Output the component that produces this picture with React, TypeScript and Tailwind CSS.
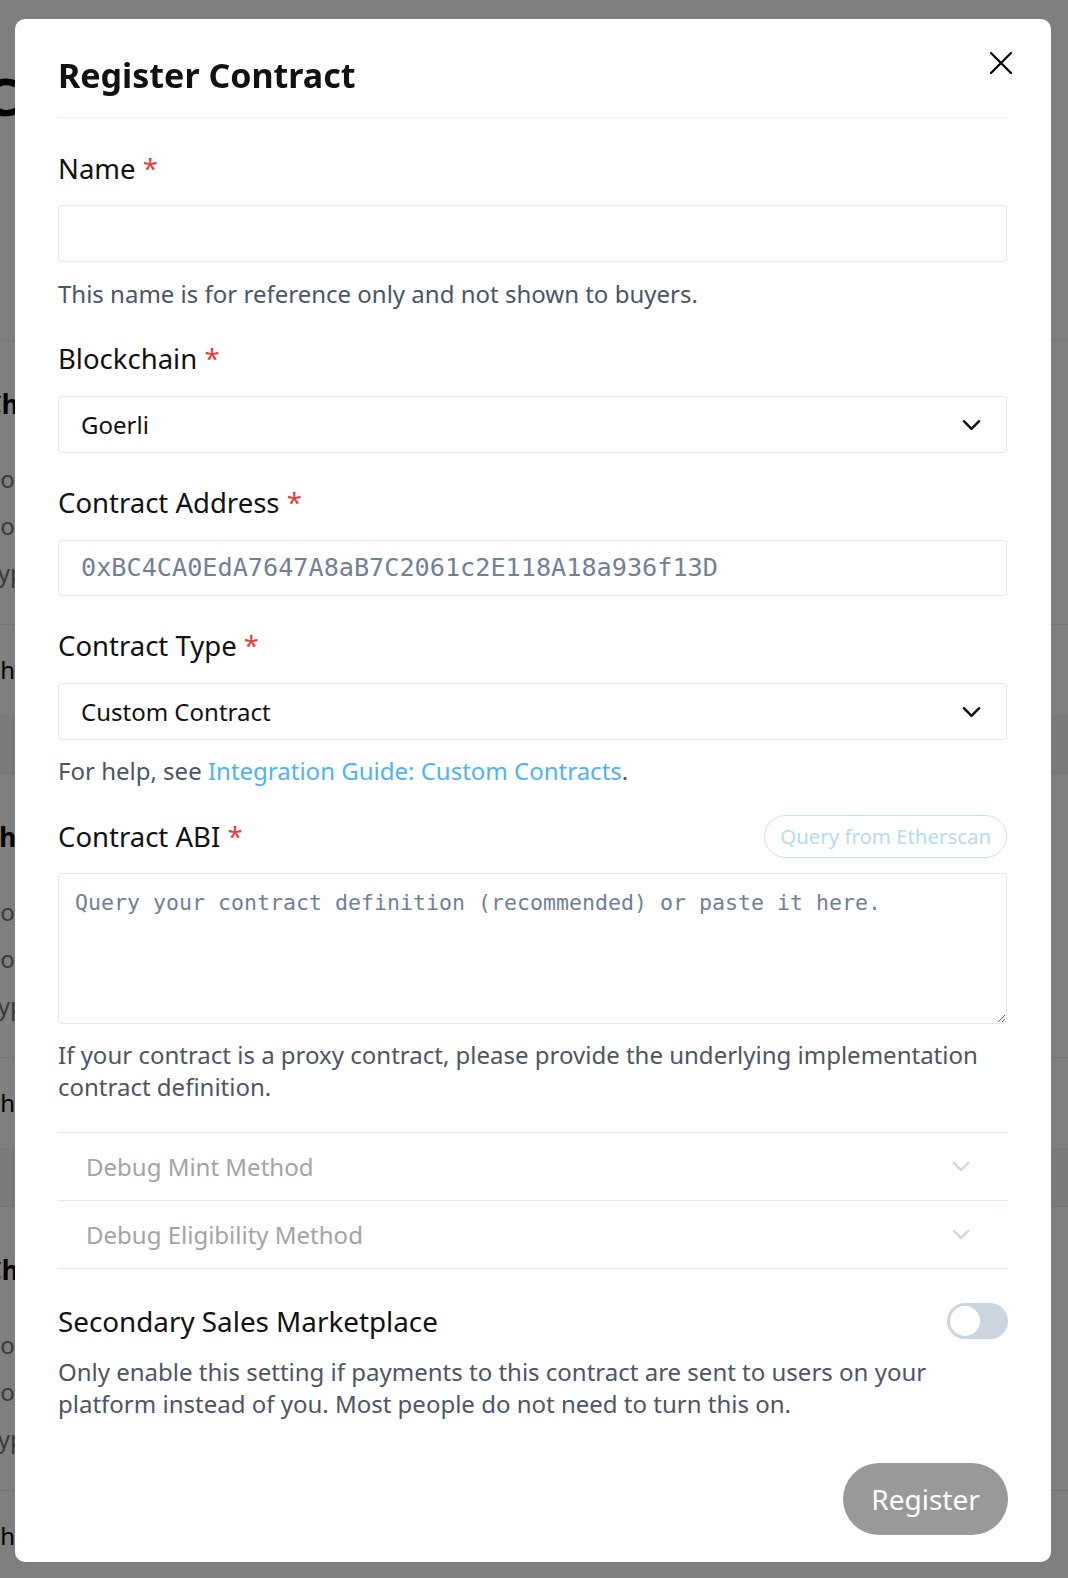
import React from 'react';

const sans = "font-['Noto_Sans',sans-serif]";

const Chevron: React.FC<{ className?: string }> = ({ className }) => (
  <svg viewBox="0 0 20 12" className={className} fill="none" stroke="currentColor" strokeWidth={2.6} strokeLinecap="round" strokeLinejoin="round">
    <path d="M2 2l8 8 8-8" />
  </svg>
);

const Label: React.FC<{ text: string }> = ({ text }) => (
  <div className="text-[27.5px] leading-[36px] text-[#111111]">
    {text} <span className="text-[#e53e3e]">*</span>
  </div>
);

const SelectBox: React.FC<{ value: string }> = ({ value }) => (
  <div className="mt-[19px] h-[57px] flex items-center justify-between pl-[22px] pr-[25px] border border-[#e2e8f0] rounded-[4px] text-[24px] text-[#111111]">
    <span>{value}</span>
    <Chevron className="w-[19px] h-[12px] text-[#111111]" />
  </div>
);

const BgCard: React.FC<{ title: string; footer: string }> = ({ title, footer }) => (
  <div className="border-t border-gray-200 bg-white">
    <div className="pt-[47px] h-[80px] text-[26px] leading-[32px] font-bold text-black">{title}</div>
    <div className="mt-[34px] text-[24px] leading-[47px] text-gray-500">
      <div>Contract address</div>
      <div>Contract name</div>
      <div>Type standard</div>
    </div>
    <div className="mt-[28px] border-t border-gray-200 h-[91px] flex items-center text-[24px] text-black">{footer}</div>
  </div>
);

export default function App() {
  return (
    <div className={`relative min-h-[1578px] bg-white overflow-hidden ${sans}`}>
      {/* page behind the dialog */}
      <div className="-ml-[15px] w-[1100px]">
        <div className="h-[340px] pt-[66px] text-[52px] leading-[60px] font-bold text-black">Contracts</div>
        <BgCard title="Chainlink Token" footer="Change settings" />
        <div className="h-[58px] bg-gray-100" />
        <BgCard title="Shiba Inu" footer="Change settings" />
        <div className="h-[58px] bg-gray-100" />
        <BgCard title="Chimp Club" footer="Change settings" />
      </div>

      <div className="fixed inset-0 bg-black/50" />

      <div className="absolute left-[15px] top-[19px] w-[1036px] bg-white rounded-[10px] pl-[43px] pr-[44px] pb-[27px]">
        <div className="relative pt-[34px] pb-[20px] border-b border-[#edf0f4]">
          <h2 className="text-[34px] leading-[44px] font-bold text-[#111111]">Register Contract</h2>
          <button className="absolute right-[-7px] top-[31px] w-[26px] h-[26px] flex items-center justify-center text-black">
            <svg viewBox="0 0 24 24" className="w-[24px] h-[24px]" fill="none" stroke="currentColor" strokeWidth={2.2} strokeLinecap="round">
              <path d="M2 2l20 20M22 2L2 22" />
            </svg>
          </button>
        </div>

        <div className="mt-[33px]">
          <Label text="Name" />
          <div className="mt-[18px] h-[57px] border border-[#e2e8f0] rounded-[4px]" />
          <p className="mt-[16px] text-[24px] leading-[32px] text-[#4a5568]">This name is for reference only and not shown to buyers.</p>
        </div>

        <div className="mt-[31px]">
          <Label text="Blockchain" />
          <SelectBox value="Goerli" />
        </div>

        <div className="mt-[32px]">
          <Label text="Contract Address" />
          <div className="mt-[19px] h-[56px] flex items-center pl-[22px] border border-[#e2e8f0] rounded-[4px] font-['DejaVu_Sans_Mono',monospace] text-[25.2px] text-[#718096]">
            0xBC4CA0EdA7647A8aB7C2061c2E118A18a936f13D
          </div>
        </div>

        <div className="mt-[32px]">
          <Label text="Contract Type" />
          <SelectBox value="Custom Contract" />
          <p className="mt-[15px] text-[24px] leading-[32px] text-[#4a5568]">
            For help, see <a className="text-[#4db3f6]">Integration Guide: Custom Contracts</a>.
          </p>
        </div>

        <div className="mt-[28px]">
          <div className="flex items-center justify-between h-[43px]">
            <Label text="Contract ABI" />
            <button className="h-[43px] px-[15px] rounded-full border border-[#c3e2f9] text-[20.4px] text-[#b3daf7]">Query from Etherscan</button>
          </div>
          <textarea
            className="mt-[15px] block w-full h-[151px] px-[16px] py-[14px] border border-[#e2e8f0] rounded-[4px] font-['DejaVu_Sans_Mono',monospace] text-[21.6px] leading-[30px] placeholder:text-[#718096] outline-none"
            placeholder="Query your contract definition (recommended) or paste it here."
          />
          <p className="mt-[15px] text-[24px] leading-[32px] text-[#4a5568]">
            If your contract is a proxy contract, please provide the underlying implementation contract definition.
          </p>
        </div>

        <div className="mt-[29px] border-t border-[#e2e8f0]">
          {['Debug Mint Method', 'Debug Eligibility Method'].map((t) => (
            <div key={t} className="h-[68px] border-b border-[#e2e8f0] flex items-center justify-between pl-[28px] pr-[37px]">
              <span className="text-[24px] text-[#a3a3a3]">{t}</span>
              <Chevron className="w-[18px] h-[11px] text-[#d6d6d6]" />
            </div>
          ))}
        </div>

        <div className="mt-[34px] flex items-center justify-between">
          <div className="text-[27.8px] leading-[36px] text-[#111111]">Secondary Sales Marketplace</div>
          <div className="w-[61px] h-[36px] rounded-full bg-[#cbd5e0] p-[3px] mr-[-1px]">
            <div className="w-[30px] h-[30px] rounded-full bg-white" />
          </div>
        </div>
        <p className="mt-[17px] text-[24px] leading-[32px] text-[#4a5568]">
          Only enable this setting if payments to this contract are sent to users on your platform instead of you. Most people do not need to turn this on.
        </p>

        <div className="mt-[43px] flex justify-end">
          <button className="h-[72px] w-[165px] mr-[-1px] rounded-full bg-[#999999] text-white text-[28px]">Register</button>
        </div>
      </div>
    </div>
  );
}
